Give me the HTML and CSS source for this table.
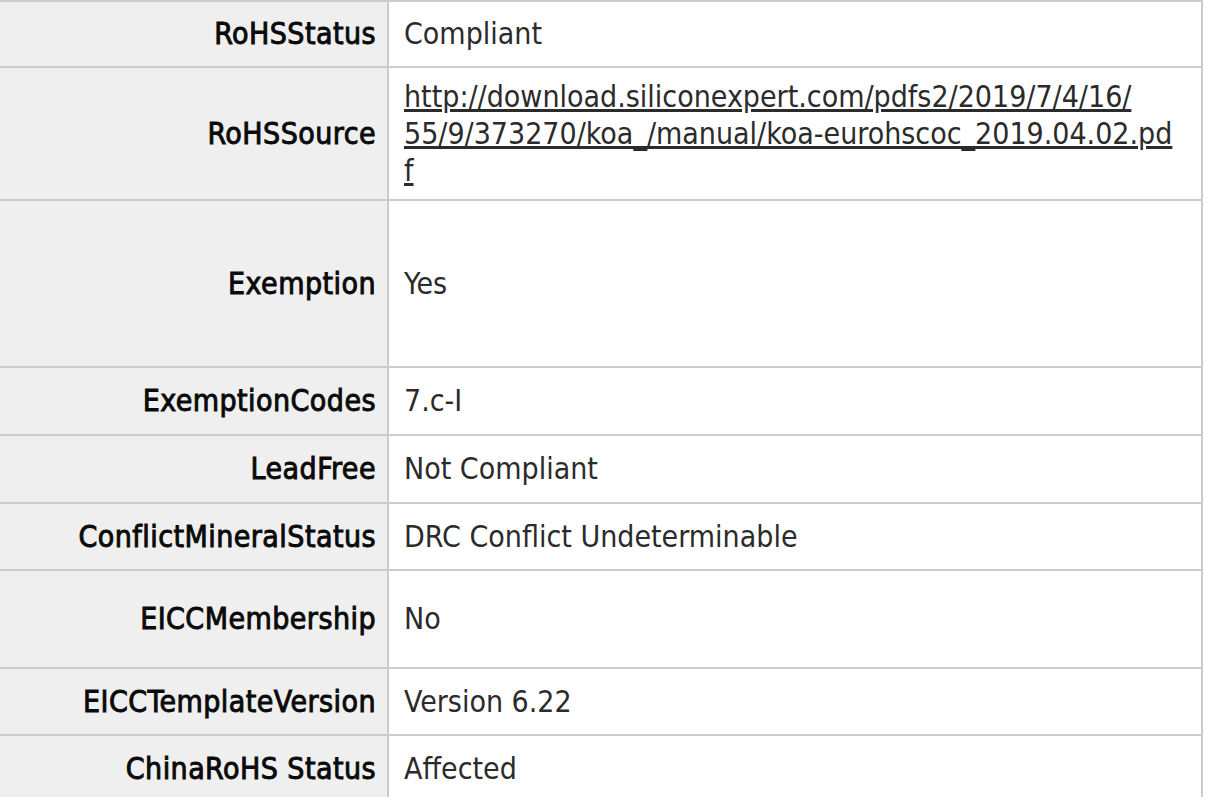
FILE: index.html
```html
<!DOCTYPE html>
<html lang="en">
<head>
<meta charset="utf-8">
<title>Environmental compliance</title>
<link rel="stylesheet" href="styles.css">
</head>
<body>
<div class="spec">
  <div class="label r1">RoHSStatus</div>
  <div class="value r1">Compliant</div>

  <div class="label source">RoHSSource</div>
  <div class="value source"><a class="link" href="#">http://download.siliconexpert.com/pdfs2/2019/7/4/16/<br>55/9/373270/koa_/manual/koa-eurohscoc_2019.04.02.pd<br>f</a></div>

  <div class="label r3">Exemption</div>
  <div class="value r3">Yes</div>

  <div class="label r4">ExemptionCodes</div>
  <div class="value r4">7.c-I</div>

  <div class="label r4">LeadFree</div>
  <div class="value r4">Not Compliant</div>

  <div class="label">ConflictMineralStatus</div>
  <div class="value">DRC Conflict Undeterminable</div>

  <div class="label r7">EICCMembership</div>
  <div class="value r7">No</div>

  <div class="label">EICCTemplateVersion</div>
  <div class="value">Version 6.22</div>

  <div class="label">ChinaRoHS Status</div>
  <div class="value">Affected</div>
</div>
</body>
</html>
```

FILE: styles.css
```css
html, body {
  margin: 0;
  padding: 0;
  background: #ffffff;
}

.spec {
  display: grid;
  grid-template-columns: 389px 814px;
  width: 1203px;
  border-top: 2px solid #cccccc;
  font-family: "DejaVu Sans Condensed", "DejaVu Sans", sans-serif;
  font-stretch: condensed;
  font-size: 30px;
  line-height: 36px;
}

.label,
.value {
  box-sizing: border-box;
  min-height: 67px;
  display: flex;
  align-items: center;
  border-bottom: 2px solid #cccccc;
  border-right: 2px solid #cccccc;
  padding: 10px 13px 10px 15px;
}

.label {
  justify-content: flex-end;
  background: #efefef;
  color: #0a0a0a;
  font-weight: normal;
  -webkit-text-stroke: 0.9px #0a0a0a;
  letter-spacing: 0.45px;
  padding-right: 11px;
}

.value {
  background: #ffffff;
  color: #2b2b2b;
}

.r1 { min-height: 66px; }
.r3 { min-height: 167px; }
.r4 { min-height: 68px; }
.r7 { min-height: 98px; }

.source {
  line-height: 37px;
}

.link {
  color: #2b2b2b;
  text-decoration: underline;
  word-break: break-all;
}
```
